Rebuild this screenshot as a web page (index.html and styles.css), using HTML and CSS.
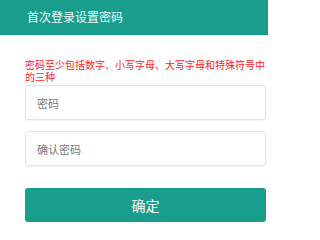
FILE: index.html
```html
<!DOCTYPE html>
<html lang="zh-CN">
<head>
<meta charset="utf-8">
<meta name="viewport" content="width=268">
<title>首次登录设置密码</title>
<link rel="stylesheet" href="styles.css">
</head>
<body>
<div class="page">
<header class="topbar">首次登录设置密码</header>
<form class="form">
  <p class="tip">密码至少包括数字、小写字母、大写字母和特殊符号中的三种</p>
  <input class="field" type="password" placeholder="密码">
  <input class="field" type="password" placeholder="确认密码">
  <button class="submit" type="button">确定</button>
</form>
</div>
</body>
</html>
```
FILE: styles.css
```css
html, body {
  margin: 0;
  padding: 0;
  background: #fff;
  font-family: "Noto Sans CJK SC", "Noto Sans", sans-serif;
}
.page {
  width: 268px;
  height: 228px;
  overflow: hidden;
}
.topbar {
  height: 35px;
  background: #199d8c;
  color: #f4fbfa;
  font-size: 12px;
  line-height: 33px;
  padding-left: 27px;
  box-sizing: border-box;
}
.form {
  display: flex;
  flex-direction: column;
  padding: 0 2px 0 25px;
}
.tip {
  margin: 24px 0 2px;
  color: #ff1a1a;
  font-size: 10px;
  line-height: 12px;
}
.field {
  height: 35px;
  box-sizing: border-box;
  border: 1px solid #e4e4e4;
  border-radius: 3px;
  box-shadow: 0 1px 1px rgba(0,0,0,0.04);
  padding: 0 11px;
  font-family: inherit;
  font-size: 11px;
  color: #333;
  outline: none;
  margin: 0;
}
.field + .field {
  margin-top: 11px;
}
.field::placeholder {
  color: #7a7a7a;
}
.submit {
  margin-top: 22px;
  height: 34px;
  border: none;
  border-radius: 3px;
  background: #199d8c;
  color: #fff;
  font-family: inherit;
  font-size: 14px;
  padding: 0;
}
```
